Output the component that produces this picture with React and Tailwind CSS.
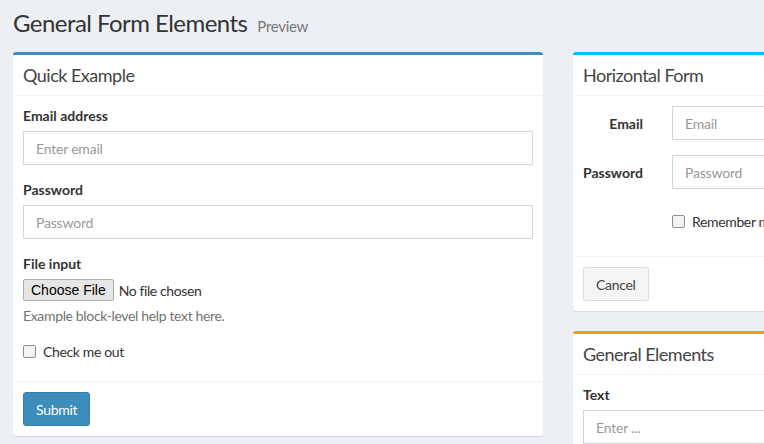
import React from 'react';

const font = { fontFamily: 'Lato, "Noto Sans", sans-serif' };

function Box({ color, title, children, footer }) {
    return (
        <div className={`bg-white rounded-[3px] border-t-[3px] ${color} shadow-[0_1px_1px_rgba(0,0,0,0.1)]`}>
            <div className="px-[10px] py-[10px] border-b border-[#f4f4f4]">
                <h3 className="text-[18px] leading-[20px] text-[#444] tracking-[-0.5px]">{title}</h3>
            </div>
            <div className="p-[10px]">{children}</div>
            {footer && <div className="border-t border-[#f4f4f4] p-[10px]">{footer}</div>}
        </div>
    );
}

function Input({ placeholder, className = '' }) {
    return (
        <input
            placeholder={placeholder}
            className={`block w-full h-[34px] px-[12px] border border-[#d2d6de] text-[14px] tracking-[-0.2px] text-[#555] placeholder:text-[#999] outline-none ${className}`}
        />
    );
}

function Check({ label }) {
    return (
        <label className="flex items-center gap-[7px] text-[14px] tracking-[-0.35px] text-[#333] h-[20px]">
            <span className="w-[13px] h-[13px] rounded-[2px] border border-[#8f8f8f] bg-[#f3f3f3]" />
            <span>{label}</span>
        </label>
    );
}

export default function App() {
    return (
        <div className="w-[764px] h-[444px] overflow-hidden bg-[#ecf0f5] text-[#333]" style={font}>
            <div className="pl-[13px] pt-[9px] h-[37px] flex items-baseline">
                <h1 className="text-[24px] leading-[28px] text-[#333] tracking-[-0.55px]">General Form Elements</h1>
                <span className="text-[15px] leading-[20px] text-[#777] pl-[10px] tracking-[-0.3px]">Preview</span>
            </div>

            <div className="flex gap-[30px] pl-[13px] pt-[15px]">
                {/* Quick Example */}
                <div className="w-[530px] shrink-0">
                    <Box
                        color="border-[#3c8dbc]"
                        title="Quick Example"
                        footer={
                            <button className="h-[34px] px-[12px] rounded-[3px] bg-[#3c8dbc] border border-[#367fa9] text-white text-[14px] tracking-[-0.3px]">
                                Submit
                            </button>
                        }
                    >
                        <div className="mb-[15px]">
                            <label className="block font-bold text-[14px] leading-[20px] mb-[5px]">Email address</label>
                            <Input placeholder="Enter email" />
                        </div>
                        <div className="mb-[15px]">
                            <label className="block font-bold text-[14px] leading-[20px] mb-[5px]">Password</label>
                            <Input placeholder="Password" />
                        </div>
                        <div>
                            <label className="block font-bold text-[14px] leading-[20px] mb-[5px]">File input</label>
                            <div className="flex items-center h-[22px]">
                                <span
                                    className="h-[22px] px-[7px] flex items-center border border-[#adadad] rounded-[2px] bg-[#e6e6e6] text-[14px] text-black"
                                    style={{ fontFamily: '"Liberation Sans", Arial, sans-serif' }}
                                >
                                    Choose File
                                </span>
                                <span className="ml-[5px] text-[14px] tracking-[-0.4px]">No file chosen</span>
                            </div>
                            <p className="mt-[5px] text-[14px] leading-[20px] text-[#737373] tracking-[-0.35px]">Example block-level help text here.</p>
                        </div>
                        <div className="mt-[15px] mb-[10px]">
                            <Check label="Check me out" />
                        </div>
                    </Box>
                </div>

                {/* Right column */}
                <div className="w-[530px] shrink-0 flex flex-col gap-[20px]">
                    <Box
                        color="border-[#00c0ef]"
                        title="Horizontal Form"
                        footer={
                            <button className="h-[34px] px-[12px] rounded-[3px] bg-[#f4f4f4] border border-[#ddd] text-[#444] text-[14px] tracking-[-0.3px]">
                                Cancel
                            </button>
                        }
                    >
                        <div className="flex items-center mb-[15px]">
                            <label className="w-[60px] text-right font-bold text-[14px]">Email</label>
                            <div className="pl-[29px] flex-1">
                                <Input placeholder="Email" />
                            </div>
                        </div>
                        <div className="flex items-center mb-[15px]">
                            <label className="w-[60px] text-right font-bold text-[14px]">Password</label>
                            <div className="pl-[29px] flex-1">
                                <Input placeholder="Password" />
                            </div>
                        </div>
                        <div className="pl-[89px] pt-[7px] pb-[15px]">
                            <Check label="Remember me" />
                        </div>
                    </Box>

                    <Box color="border-[#f39c12]" title="General Elements">
                        <label className="block font-bold text-[14px] leading-[20px] mb-[5px]">Text</label>
                        <Input placeholder="Enter ..." />
                    </Box>
                </div>
            </div>
        </div>
    );
}
